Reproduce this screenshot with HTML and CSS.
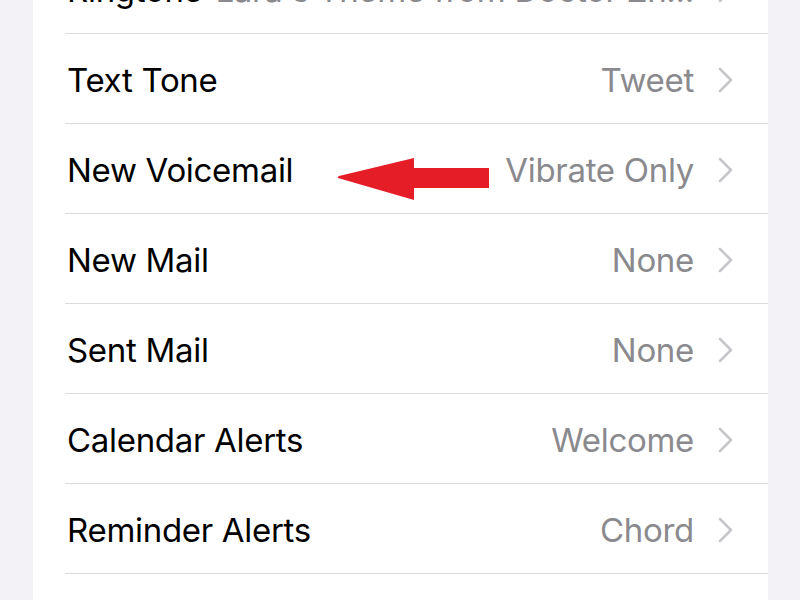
FILE: index.html
```html
<!DOCTYPE html>
<html lang="en">

<head>
    <meta charset="UTF-8">
    <meta name="viewport" content="width=device-width, initial-scale=1.0">
    <title>Sounds</title>
    <link rel="stylesheet" href="styles.css">
</head>

<body>
    <div id="screen">
        <ul class="list">
            <li class="row">
                <span class="label">Ringtone</span>
                <span class="value">Lara's Theme from Doctor Zh...</span>
                <svg class="chevron" width="15" height="26" viewBox="0 0 15 26"><polyline points="2,2 13,13 2,24" /></svg>
            </li>
            <li class="row">
                <span class="label">Text Tone</span>
                <span class="value">Tweet</span>
                <svg class="chevron" width="15" height="26" viewBox="0 0 15 26"><polyline points="2,2 13,13 2,24" /></svg>
            </li>
            <li class="row">
                <span class="label">New Voicemail</span>
                <!-- red pointer drawn over the row -->
                <svg class="arrow" width="160" height="50" viewBox="0 0 160 50">
                    <path d="M1 21 Q0 20 2 19 L77 1 L77 11 L152 11 L152 31 L77 31 L77 43 Z" fill="#e51d27" />
                </svg>
                <span class="value">Vibrate Only</span>
                <svg class="chevron" width="15" height="26" viewBox="0 0 15 26"><polyline points="2,2 13,13 2,24" /></svg>
            </li>
            <li class="row">
                <span class="label">New Mail</span>
                <span class="value">None</span>
                <svg class="chevron" width="15" height="26" viewBox="0 0 15 26"><polyline points="2,2 13,13 2,24" /></svg>
            </li>
            <li class="row">
                <span class="label">Sent Mail</span>
                <span class="value">None</span>
                <svg class="chevron" width="15" height="26" viewBox="0 0 15 26"><polyline points="2,2 13,13 2,24" /></svg>
            </li>
            <li class="row">
                <span class="label">Calendar Alerts</span>
                <span class="value">Welcome</span>
                <svg class="chevron" width="15" height="26" viewBox="0 0 15 26"><polyline points="2,2 13,13 2,24" /></svg>
            </li>
            <li class="row">
                <span class="label">Reminder Alerts</span>
                <span class="value">Chord</span>
                <svg class="chevron" width="15" height="26" viewBox="0 0 15 26"><polyline points="2,2 13,13 2,24" /></svg>
            </li>
        </ul>
    </div>
</body>

</html>
```

FILE: styles.css
```css
* {
    margin: 0;
    padding: 0;
    box-sizing: border-box;
    font-family: Inter, "Noto Sans", sans-serif;
}

html,
body {
    height: 100%;
    overflow: hidden;
    background-color: #f2f2f7;
}

#screen {
    display: flow-root;
    width: 735px;
    margin-left: 33px;
    height: 100%;
    background-color: white;
}

.list {
    list-style-type: none;
    margin-top: -56px;
}

.row {
    position: relative;
    display: flex;
    align-items: center;
    height: 90px;
    margin-left: 32px;
    padding-left: 2px;
    padding-top: 3px;
    padding-right: 35px;
    border-bottom: 1px solid #dcdce0;
    font-size: 33px;
    letter-spacing: -0.3px;
}

.label {
    color: #000;
    white-space: nowrap;
}

.value {
    margin-left: auto;
    color: #8a8a8e;
    white-space: nowrap;
}

.chevron {
    flex-shrink: 0;
    margin-left: 24px;
    fill: none;
    stroke: #c6c6cb;
    stroke-width: 2.6;
    stroke-linecap: round;
    stroke-linejoin: round;
}

.arrow {
    position: absolute;
    left: 272px;
    top: 33px;
}
```
